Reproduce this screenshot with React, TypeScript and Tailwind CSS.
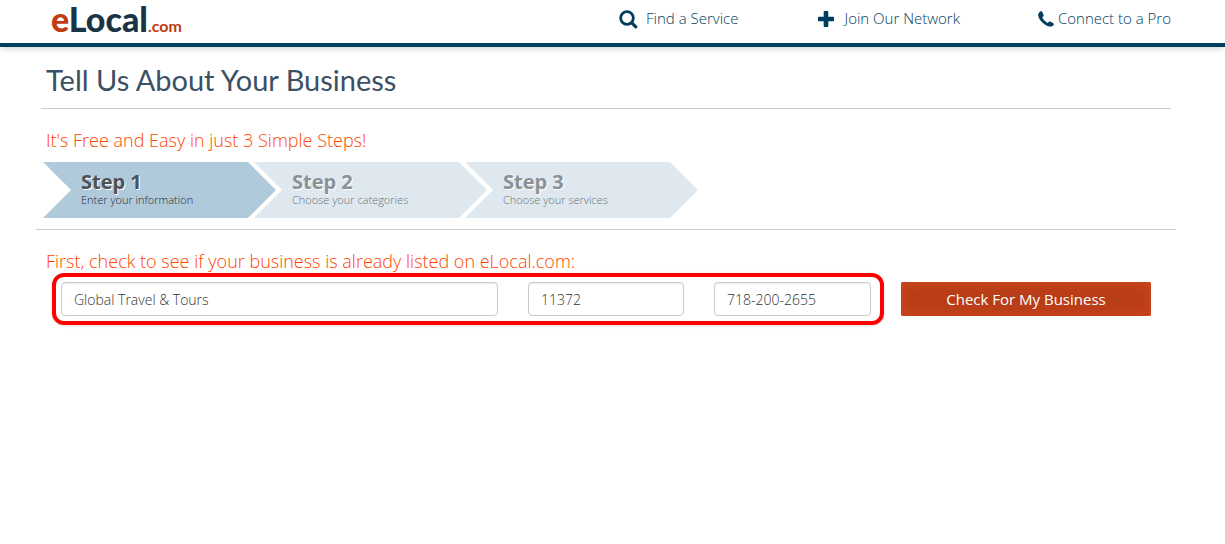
import type { ReactNode } from "react";

const navItems = [
  { title: "Find a Service", href: "#find", icon: <SearchIcon />, className: "gap-2" },
  { title: "Join Our Network", href: "#join", icon: <PlusIcon />, className: "gap-2" },
  { title: "Connect to a Pro", href: "#connect", icon: <PhoneIcon />, className: "gap-1" },
];

const steps = [
  { title: "Step 1", text: "Enter your information", isActive: true },
  { title: "Step 2", text: "Choose your categories", isActive: false },
  { title: "Step 3", text: "Choose your services", isActive: false },
];

function SearchIcon() {
  return (
    <svg viewBox="0 0 20 20" className="size-5" fill="none" stroke="currentColor" aria-hidden="true">
      <circle cx="9" cy="9" r="6.3" strokeWidth="2.8" />
      <path d="M13.800 13.800l4 4" strokeWidth="3.2" strokeLinecap="round" />
    </svg>
  );
}

function PlusIcon() {
  return (
    <svg viewBox="0 0 20 20" className="size-5" fill="currentColor" aria-hidden="true">
      <path d="M8.500 2h3a.8.8 0 0 1 .8.8v4.900h4.900a.8.8 0 0 1 .8.8v3a.8.8 0 0 1-.8.8h-4.900v4.900a.8.8 0 0 1-.8.8h-3a.8.8 0 0 1-.8-.8v-4.900H2.800a.8.8 0 0 1-.8-.8v-3a.8.8 0 0 1 .8-.8h4.900V2.800a.8.8 0 0 1 .8-.8z" />
    </svg>
  );
}

function PhoneIcon() {
  return (
    <svg viewBox="0 0 16 16" className="size-4" fill="currentColor" aria-hidden="true">
      <path d="M1.200 1.500C2 .6 3.400 0 4 .6l1.500 3.200c.3.700.2 1.200-.3 1.600l-1 .9c.6 1.800 3.300 4.700 5.400 5.600l1-1c.5-.5 1-.6 1.600-.3l3.100 1.700c.8.5.7 1 .2 1.700-.9 1.200-2.400 1.800-4.300 1.500C6.600 14.800.7 9 .2 4.600 0 3.300.400 2.300 1.200 1.500z" />
    </svg>
  );
}

function Logo() {
  return (
    <a href="#home" className="pt-0.5 font-[Lato,sans-serif] font-black leading-8 text-[#1b3445]">
      <span className="text-[34px] text-[#c03a12]">e</span>
      <span className="text-[34px]">Local</span>
      <span className="text-base font-bold text-[#c03a12]">.com</span>
    </a>
  );
}

function Header() {
  return (
    <header className="border-b-4 border-[#003e5e] shadow-md">
      <div className="flex h-[43px] items-center justify-between pl-[51px] pr-[54px]">
        <Logo />
        <nav className="flex gap-[78px] pb-1.5 text-[15px] text-[#003d5c]">
          {navItems.map(({ title, href, icon, className }) => (
            <a key={title} href={href} className={`flex items-center ${className}`}>
              {icon}
              {title}
            </a>
          ))}
        </nav>
      </div>
    </header>
  );
}

function Steps() {
  return (
    <ol className="ml-0.5 flex pt-2.5 pb-[11px]">
      {steps.map(({ title, text, isActive }) => (
        <li
          key={title}
          className={`-mr-[22px] h-14 w-[233px] pt-2 pl-[38px] [clip-path:polygon(0_0,205px_0,100%_50%,205px_100%,0_100%,28px_50%)] ${
            isActive ? "bg-[#b1cadb] text-[#1c2630]" : "bg-[#dee8ee] text-[#6b7379]"
          }`}
        >
          <h2
            className={`text-xl leading-6 font-bold [text-shadow:1px_1px_0_#fff] ${
              isActive ? "text-[#4a5359]" : "text-[#8b9297]"
            }`}
          >
            {title}
          </h2>
          <p className="text-[11px] leading-3">{text}</p>
        </li>
      ))}
    </ol>
  );
}

function Field({ label, value }: { label: string; value: string }) {
  return (
    <input
      type="text"
      aria-label={label}
      defaultValue={value}
      className="h-[34px] w-full min-w-0 rounded border border-[#ccc] bg-white px-3 text-sm text-[#333] shadow-[inset_0_1px_1px_rgba(0,0,0,0.075)]"
    />
  );
}

function Lead({ children }: { children: ReactNode }) {
  return <p className="pl-[5px] text-lg leading-6 font-light text-[#ff4500]">{children}</p>;
}

export default function App() {
  return (
    <div className="min-h-screen bg-white font-['Open_Sans',sans-serif] font-light">
      <Header />
      <main className="pr-[54px] pl-[41px]">
        <h1 className="border-b border-[#ccc] pt-[15px] pb-2.5 pl-[5px] font-[Lato,sans-serif] text-[29px] leading-9 font-normal text-[#3b5064]">
          Tell Us About Your Business
        </h1>
        <div className="pt-[19px]">
          <Lead>It's Free and Easy in just 3 Simple Steps!</Lead>
        </div>
        <Steps />
        <hr className="-mx-[5px] border-[#ccc]" />
        <form className="pt-[19px]" onSubmit={(e) => e.preventDefault()}>
          <Lead>First, check to see if your business is already listed on eLocal.com:</Lead>
          <div className="mt-[9px] grid grid-cols-[810fr_250fr] gap-[30px] px-5">
            <div className="relative grid grid-cols-[437fr_156fr_157fr] gap-[30px]">
              <Field label="Business name" value="Global Travel & Tours" />
              <Field label="Zip code" value="11372" />
              <Field label="Phone" value="718-200-2655" />
              <div className="pointer-events-none absolute -inset-y-[9px] -left-[9px] -right-[13px] rounded-xl border-4 border-[#ff0000] shadow" />
            </div>
            <button
              type="submit"
              className="h-[34px] rounded-xs bg-[#b83d18] text-[15px] font-normal text-white shadow-[inset_0_0_14px_2px_#cb461c]"
            >
              Check For My Business
            </button>
          </div>
        </form>
      </main>
    </div>
  );
}
